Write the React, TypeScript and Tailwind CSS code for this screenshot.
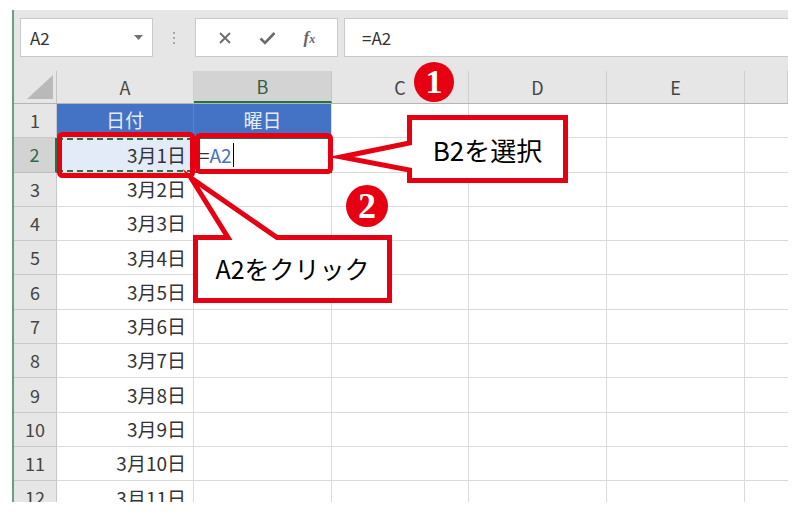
const RED = "#e60012";

const colHeads = [
  { label: "A", w: "w-[137px]" },
  { label: "B", w: "w-[138px]", sel: true },
  { label: "C", w: "w-[137px]" },
  { label: "D", w: "w-[138px]" },
  { label: "E", w: "w-[138px]" },
  { label: "", w: "w-[43px]" },
];

function Toolbar() {
  return (
    <div className="flex h-[61px] items-start bg-[#e6e6e6] pl-[6px] pt-[8px]">
      {/* Name box */}
      <div className="flex h-[39px] w-[133px] items-center justify-between border border-[#c9c9c9] bg-white pl-[9px] pr-[9px]">
        <span className="text-[17px] text-[#333]">A2</span>
        <svg width="9" height="6" viewBox="0 0 9 6">
          <path d="M0 0 L9 0 L4.5 5 Z" fill="#707070" />
        </svg>
      </div>
      <div className="flex h-[39px] w-[42px] flex-col items-center justify-center gap-[3px]">
        <span className="h-[2px] w-[2px] bg-[#a8a8a8]" />
        <span className="h-[2px] w-[2px] bg-[#a8a8a8]" />
        <span className="h-[2px] w-[2px] bg-[#a8a8a8]" />
      </div>
      {/* cancel / enter / fx */}
      <div className="flex h-[39px] w-[143px] items-center justify-around border border-[#c9c9c9] bg-white px-[8px]">
        <svg width="14" height="14" viewBox="0 0 14 14">
          <path d="M2 2 L12 12 M12 2 L2 12" stroke="#6b6b6b" strokeWidth="1.8" />
        </svg>
        <svg width="17" height="14" viewBox="0 0 17 14">
          <path d="M1.5 7.5 L6 12 L15.5 2" stroke="#6b6b6b" strokeWidth="2.6" fill="none" />
        </svg>
        <span className="font-['Liberation_Serif'] text-[17px] font-bold italic text-[#666]">
          f<span className="text-[12px]">x</span>
        </span>
      </div>
      {/* formula input */}
      <div className="ml-[6px] flex h-[39px] flex-1 items-center border-y border-l border-[#c9c9c9] bg-white pl-[17px]">
        <span className="text-[17px] text-[#333]">=A2</span>
      </div>
    </div>
  );
}

function HeaderRow() {
  return (
    <div className="flex h-[33px] border-b border-[#b5b5b5] bg-[#e6e6e6]">
      <div className="relative w-[43px] shrink-0 border-r border-[#c4c4c4]">
        <svg className="absolute bottom-[4px] right-[3px]" width="26" height="24" viewBox="0 0 26 24">
          <path d="M0 24 L26 24 L26 0 Z" fill="#b9b9b9" />
        </svg>
      </div>
      {colHeads.map((c, i) => (
        <div
          key={i}
          className={`${c.w} flex shrink-0 items-center justify-center text-[18px] ${
            c.sel
              ? "border-b-2 border-r border-b-[#217346] border-r-[#c4c4c4] bg-[#d3d3d3] text-[#2f5f44]"
              : "border-r border-[#cfcfcf] text-[#444]"
          }`}
        >
          {c.label}
        </div>
      ))}
    </div>
  );
}

function Cell({ w, children, className = "" }: { w: string; children?: React.ReactNode; className?: string }) {
  return (
    <div className={`${w} relative flex shrink-0 items-center border-b border-r border-[#dadada] ${className}`}>
      {children}
    </div>
  );
}

function Row({ n }: { n: number }) {
  const sel = n === 2;
  return (
    <div className="flex h-[34.3px]">
      <div
        className={`flex w-[43px] shrink-0 items-center justify-center border-b text-[18px] ${
          sel
            ? "border-r-2 border-b-[#bdbdbd] border-r-[#217346] bg-[#d3d3d3] text-[#2f6b48]"
            : "border-r border-[#c8c8c8] bg-[#e6e6e6] text-[#444]"
        }`}
      >
        {n}
      </div>
      {n === 1 ? (
        <>
          <Cell w="w-[137px]" className="justify-center border-r-[#5a82cc] border-b-[#dadada] bg-[#4472c4] text-[#e6ecf7]">
            日付
          </Cell>
          <Cell w="w-[138px]" className="justify-center bg-[#4472c4] text-[#e6ecf7]">
            曜日
          </Cell>
        </>
      ) : sel ? (
        <>
          <Cell w="w-[137px]" className="justify-end bg-[#e2ebf7] pr-[7px] text-[#333]">
            <div className="absolute inset-0 border-2 border-dashed border-[#217346]" />
            3月1日
          </Cell>
          <Cell w="w-[138px]" className="pl-[5px] text-[#333]">
            <div className="absolute -inset-[1px] border-2 border-[#217346]" />
            <span>=</span>
            <span className="text-[#4472c4]">A2</span>
            <span className="ml-[1px] h-[24px] w-[1px] bg-black" />
          </Cell>
        </>
      ) : (
        <>
          <Cell w="w-[137px]" className="justify-end pr-[7px] text-[#333]">
            3月{n - 1}日
          </Cell>
          <Cell w="w-[138px]" />
        </>
      )}
      <Cell w="w-[137px]" />
      <Cell w="w-[138px]" />
      <Cell w="w-[138px]" />
      <Cell w="w-[43px]" className="border-r-0" />
    </div>
  );
}

function Annotations() {
  return (
    <>
      <svg className="pointer-events-none absolute left-0 top-0" width="800" height="516" viewBox="0 0 800 516">
        <rect x="59.5" y="134.5" width="133" height="41" rx="3" fill="none" stroke={RED} strokeWidth="5" />
        <rect x="197.5" y="135.5" width="133" height="36" rx="3" fill="none" stroke={RED} strokeWidth="5" />
        <path
          d="M409.5 117.5 L565.5 117.5 L565.5 180.5 L409.5 180.5 L409.5 170 L341 157 L409.5 143 Z"
          fill="white"
          stroke={RED}
          strokeWidth="5"
          strokeMiterlimit="10"
        />
        <path
          d="M195.5 237.5 L228 237.5 L191 178 L277 237.5 L389.5 237.5 L389.5 300.5 L195.5 300.5 Z"
          fill="white"
          stroke={RED}
          strokeWidth="5"
          strokeMiterlimit="10"
        />
      </svg>
      <div className="pointer-events-none absolute left-[407px] top-[115px] flex h-[68px] w-[161px] items-center justify-center text-[26px] text-black">
        B2を選択
      </div>
      <div className="pointer-events-none absolute left-[193px] top-[235px] flex h-[68px] w-[199px] items-center justify-center text-[25px] text-black">
        A2をクリック
      </div>
      <div className="absolute left-[414px] top-[62px] flex h-[40px] w-[40px] items-center justify-center rounded-full bg-[#e60012] font-['Liberation_Serif'] text-[34px] font-bold leading-none text-white">
        1
      </div>
      <div className="absolute left-[346px] top-[185px] flex h-[42px] w-[42px] items-center justify-center rounded-full bg-[#e60012] font-['Liberation_Serif'] text-[36px] font-bold leading-none text-white">
        2
      </div>
    </>
  );
}

export default function App() {
  return (
    <div className="relative h-[516px] w-[800px] overflow-hidden bg-white pl-[12px] pt-[10px] font-['Noto_Sans','Noto_Sans_CJK_JP',sans-serif] text-[19px]">
      <div className="h-[492px] w-[776px] overflow-hidden border-l-2 border-[#6a9f80] font-['Noto_Sans_CJK_JP',sans-serif]">
        <Toolbar />
        <HeaderRow />
        {Array.from({ length: 12 }, (_, i) => (
          <Row key={i} n={i + 1} />
        ))}
      </div>
      <div className="font-['Noto_Sans_CJK_JP',sans-serif]">
        <Annotations />
      </div>
    </div>
  );
}
